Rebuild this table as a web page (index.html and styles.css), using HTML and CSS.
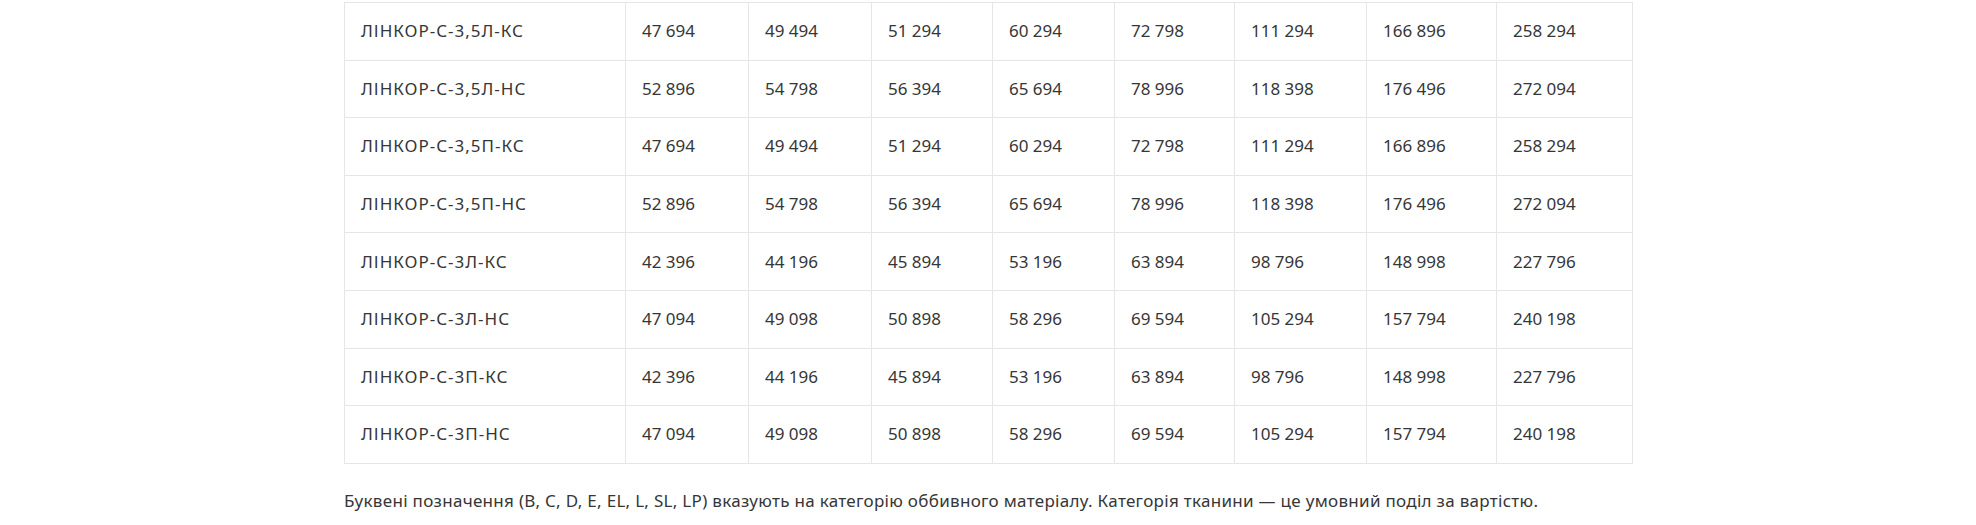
FILE: index.html
```html
<!DOCTYPE html>
<html lang="uk">
<head>
<meta charset="utf-8">
<link rel="stylesheet" href="styles.css">
</head>
<body>
<div class="wrap">
  <table class="price">
    <colgroup>
      <col class="c0"><col class="c1"><col class="c2"><col class="c3"><col class="c4"><col class="c5"><col class="c6"><col class="c7"><col class="c8">
    </colgroup>
    <tbody>
      <tr><td class="name">ЛІНКОР-С-3,5Л-КС</td><td>47 694</td><td>49 494</td><td>51 294</td><td>60 294</td><td>72 798</td><td>111 294</td><td>166 896</td><td>258 294</td></tr>
      <tr><td class="name">ЛІНКОР-С-3,5Л-НС</td><td>52 896</td><td>54 798</td><td>56 394</td><td>65 694</td><td>78 996</td><td>118 398</td><td>176 496</td><td>272 094</td></tr>
      <tr><td class="name">ЛІНКОР-С-3,5П-КС</td><td>47 694</td><td>49 494</td><td>51 294</td><td>60 294</td><td>72 798</td><td>111 294</td><td>166 896</td><td>258 294</td></tr>
      <tr><td class="name">ЛІНКОР-С-3,5П-НС</td><td>52 896</td><td>54 798</td><td>56 394</td><td>65 694</td><td>78 996</td><td>118 398</td><td>176 496</td><td>272 094</td></tr>
      <tr><td class="name">ЛІНКОР-С-3Л-КС</td><td>42 396</td><td>44 196</td><td>45 894</td><td>53 196</td><td>63 894</td><td>98 796</td><td>148 998</td><td>227 796</td></tr>
      <tr><td class="name">ЛІНКОР-С-3Л-НС</td><td>47 094</td><td>49 098</td><td>50 898</td><td>58 296</td><td>69 594</td><td>105 294</td><td>157 794</td><td>240 198</td></tr>
      <tr><td class="name">ЛІНКОР-С-3П-КС</td><td>42 396</td><td>44 196</td><td>45 894</td><td>53 196</td><td>63 894</td><td>98 796</td><td>148 998</td><td>227 796</td></tr>
      <tr><td class="name">ЛІНКОР-С-3П-НС</td><td>47 094</td><td>49 098</td><td>50 898</td><td>58 296</td><td>69 594</td><td>105 294</td><td>157 794</td><td>240 198</td></tr>
    </tbody>
  </table>
  <p class="note">Буквені позначення (B, C, D, E, EL, L, SL, LP) вказують на категорію оббивного матеріалу. Категорія тканини — це умовний поділ за вартістю.</p>
</div>
</body>
</html>
```
FILE: styles.css
```css
html, body {
  margin: 0;
  padding: 0;
  background: #ffffff;
}
body {
  font-family: "Noto Sans", "Open Sans", sans-serif;
  color: #363636;
}
.wrap {
  width: 1287px;
  margin: 2px 0 0 344px;
}
.price {
  border-collapse: collapse;
  table-layout: fixed;
  width: 1288px;
}
.c0 { width: 281px; }
.c1 { width: 123px; }
.c2 { width: 123px; }
.c3 { width: 121px; }
.c4 { width: 122px; }
.c5 { width: 120px; }
.c6 { width: 132px; }
.c7 { width: 130px; }
.c8 { width: 136px; }
.price tr {
  height: 57.6px;
}
.price td {
  border: 1px solid #e6e6e6;
  padding: 0 0 0 16px;
  font-size: 17px;
  line-height: 20px;
  white-space: nowrap;
  vertical-align: middle;
}
.price td.name {
  letter-spacing: 1px;
}
.note {
  margin: 25px 0 0 0;
  font-size: 17px;
  line-height: 24px;
  letter-spacing: 0.3px;
  color: #363636;
}
```
